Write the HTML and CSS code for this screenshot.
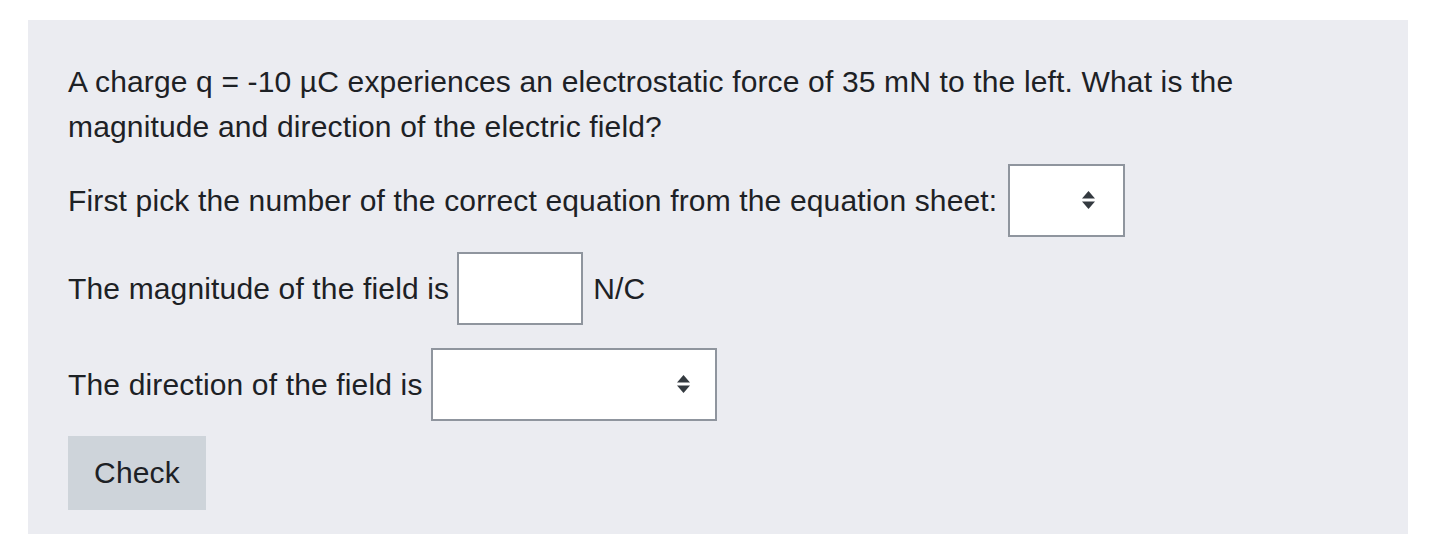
FILE: index.html
```html
<!DOCTYPE html>
<html lang="en">
<head>
<meta charset="utf-8">
<title>Question</title>
<link rel="stylesheet" href="styles.css">
</head>
<body>
<div class="panel">
  <p class="qtext">A charge q = -10 µC experiences an electrostatic force of 35 mN to the left. What is the magnitude and direction of the electric field?</p>
  <div class="row row-eq">
    <span>First pick the number of the correct equation from the equation sheet:</span>
    <div class="select select-eq">
      <svg class="arrows" width="13" height="19" viewBox="0 0 13 19"><polygon points="6.5,0 13,7.5 0,7.5"/><polygon points="0,10.5 13,10.5 6.5,18"/></svg>
    </div>
  </div>
  <div class="row row-mag">
    <span class="label">The magnitude of the field is</span>
    <div class="textbox"></div>
    <span>N/C</span>
  </div>
  <div class="row row-dir">
    <span class="label">The direction of the field is</span>
    <div class="select select-dir">
      <svg class="arrows" width="13" height="19" viewBox="0 0 13 19"><polygon points="6.5,0 13,7.5 0,7.5"/><polygon points="0,10.5 13,10.5 6.5,18"/></svg>
    </div>
  </div>
  <div class="btnrow"><button class="btn">Check</button></div>
</div>
</body>
</html>
```
FILE: styles.css
```css
html, body {
  margin: 0;
  padding: 0;
  background: #ffffff;
}
body {
  padding: 20px 40px 0 28px;
  font-family: "Liberation Sans", Arial, Helvetica, sans-serif;
  color: #1d2125;
  font-size: 30px;
  line-height: 45px;
  letter-spacing: 0.15px;
}
.panel {
  width: 1380px;
  height: 514px;
  box-sizing: border-box;
  background: #ebecf1;
  padding: 39px 40px 0 40px;
}
.qtext {
  margin: 0;
  width: 1200px;
}
.row {
  display: flex;
  align-items: center;
  gap: 10px;
}
.row-eq { margin-top: 15px; gap: 11px; }
.row-mag { margin-top: 15px; }
.row-dir { margin-top: 23px; }
.label { margin-right: -2px; }
.select, .textbox {
  box-sizing: border-box;
  height: 73px;
  background: #ffffff;
  border: 2px solid #8f959e;
  flex: none;
}
.select {
  display: flex;
  align-items: center;
  justify-content: flex-end;
  padding-right: 28px;
}
.select-eq { width: 117px; }
.select-dir { width: 286px; padding-right: 25px; }
.textbox { width: 126px; }
.arrows { display: block; fill: #343a40; }
.btnrow { margin-top: 15px; }
.btn {
  width: 138px;
  height: 74px;
  border: none;
  border-radius: 0;
  background: #ced4da;
  color: #1d2125;
  font-family: "Liberation Sans", Arial, Helvetica, sans-serif;
  font-size: 30px;
  letter-spacing: 0.15px;
  padding: 0;
}
```
